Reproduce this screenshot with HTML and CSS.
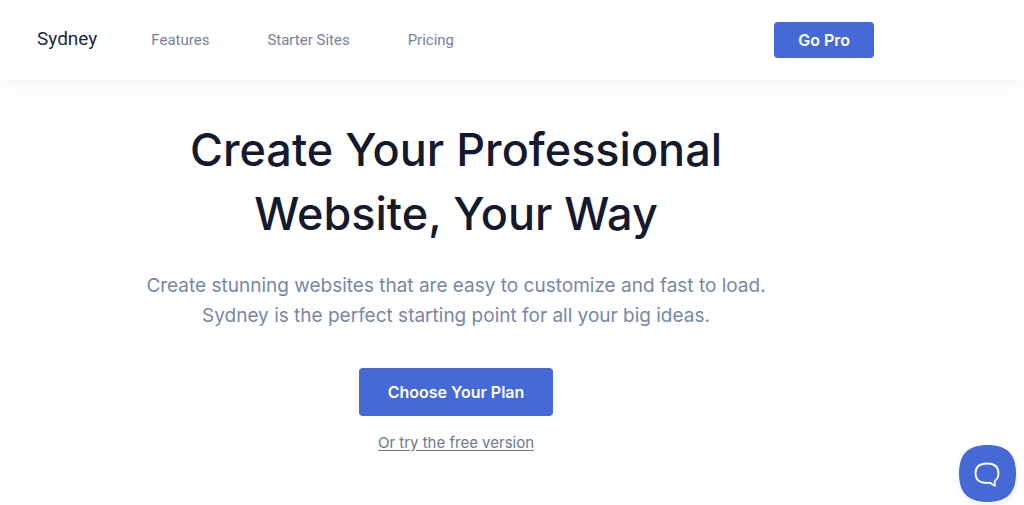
FILE: index.html
```
<!DOCTYPE html>
<html lang="en">
<head>
<meta charset="utf-8">
<meta name="viewport" content="width=device-width, initial-scale=1">
<title>Sydney</title>
<link rel="stylesheet" href="styles.css">
</head>
<body>
<header class="header">
  <div class="header-inner">
    <a class="brand" href="#">Sydney</a>
    <nav class="nav">
      <a href="#">Features</a>
      <a href="#">Starter Sites</a>
      <a href="#">Pricing</a>
    </nav>
    <a class="button button-small" href="#">Go Pro</a>
  </div>
</header>
<main class="hero">
  <h1 class="title">Create Your Professional<br>Website, Your Way</h1>
  <p class="lead">Create stunning websites that are easy to customize and fast to load.<br>Sydney is the perfect starting point for all your big ideas.</p>
  <a class="button button-large" href="#">Choose Your Plan</a>
  <a class="free-link" href="#">Or try the free version</a>
</main>
<button class="chat" type="button" aria-label="Open chat">
  <svg class="chat-shape" viewBox="0 0 57 57" aria-hidden="true">
    <path fill="#4669d8" d="M28.500 0C48 0 57 9 57 28.500S48 57 28.500 57 0 48 0 28.500 9 0 28.500 0Z"/>
    <path fill="none" stroke="#fff" stroke-width="1.800" stroke-linejoin="round" d="M28 18.500C20 18.500 16.500 21.500 16.500 28.200S20 37.900 28 37.900C29.100 37.900 30.200 37.800 31.200 37.700C32.500 39.200 34 40.200 36 40.800C35.500 39 35.500 37.500 35.900 35.800C38.400 34.200 39.500 31.800 39.500 28.200C39.500 21.500 36 18.500 28 18.500Z"/>
  </svg>
</button>
</body>
</html>
```
FILE: styles.css
```
* {
  box-sizing: border-box;
}
body {
  margin: 0;
  background: #fff;
  color: #14192d;
  font-family: Inter, sans-serif;
}
.header {
  background: #fff;
  box-shadow: 0 5px 20px rgba(0, 0, 0, 0.05);
}
.header-inner {
  display: flex;
  align-items: center;
  min-height: 80px;
  padding: 0 150px 0 37px;
}
.brand {
  padding-bottom: 2px;
  color: #20263b;
  font: 19px/24px Roboto, sans-serif;
  text-decoration: none;
}
.nav {
  display: flex;
  gap: 58px;
  margin-left: 54px;
}
.nav a {
  color: #77829a;
  font: 15px/20px Roboto, sans-serif;
  text-decoration: none;
}
.button {
  border-radius: 4px;
  background: #4669d8;
  color: #fff;
  font-weight: 600;
  text-align: center;
  text-decoration: none;
}
.button-small {
  margin-left: auto;
  padding: 8px 24px;
  font-size: 16px;
  line-height: 20px;
}
.hero {
  display: flex;
  flex-direction: column;
  align-items: center;
  padding: 38px 112px 40px 0;
  text-align: center;
}
.title {
  margin: 0;
  font-size: 45px;
  font-weight: 500;
  line-height: 64px;
}
.lead {
  margin: 25px 0 37px;
  color: #7688a5;
  font-size: 19px;
  line-height: 30px;
}
.button-large {
  padding: 12px 29px;
  font-size: 16px;
  line-height: 24px;
}
.free-link {
  margin-top: 17px;
  color: #6d7690;
  font-size: 15px;
  line-height: 20px;
  text-underline-offset: 2px;
}
.chat {
  position: fixed;
  right: 8px;
  bottom: 3px;
  width: 57px;
  height: 57px;
  padding: 0;
  border: 0;
  border-radius: 22px;
  background: none;
  box-shadow: 0 2px 6px rgba(0, 0, 0, 0.08);
}
.chat-shape {
  display: block;
  width: 100%;
}
```
